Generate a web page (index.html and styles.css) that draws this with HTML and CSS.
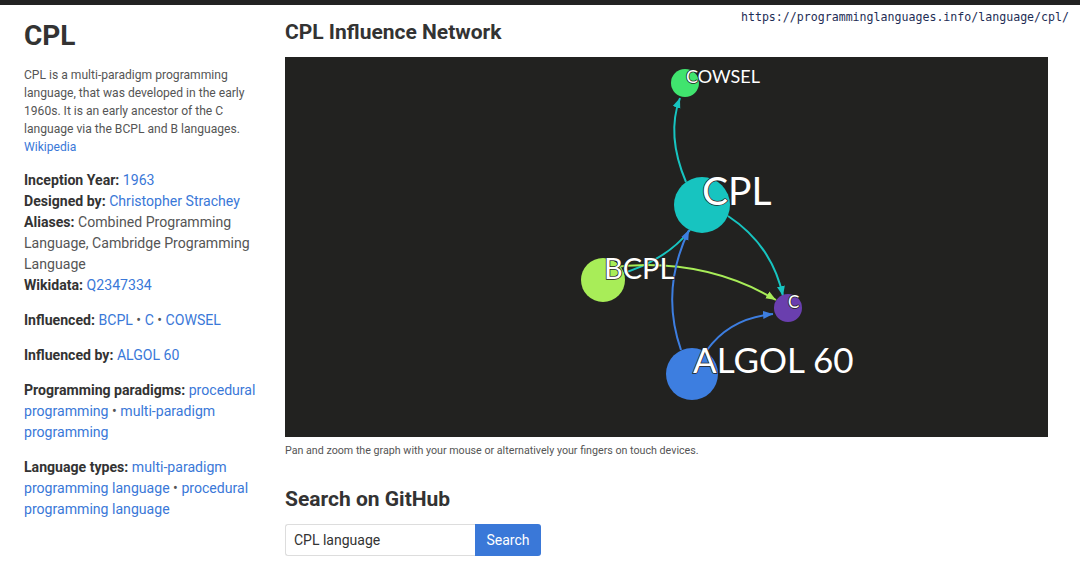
FILE: index.html
```html
<!DOCTYPE html>
<html lang="en">
<head>
<meta charset="utf-8">
<title>CPL</title>
<link rel="stylesheet" href="styles.css">
</head>
<body>
<div class="topbar"></div>
<div class="url">https://programminglanguages.info/language/cpl/</div>
<div class="page">
  <aside class="side">
    <h1 class="title">CPL</h1>
    <p class="summary">CPL is a multi-paradigm programming language, that was developed in the early 1960s. It is an early ancestor of the C language via the BCPL and B languages. <a href="#">Wikipedia</a></p>
    <p class="facts">
      <b>Inception Year:</b> <a href="#">1963</a><br>
      <b>Designed by:</b> <a href="#">Christopher Strachey</a><br>
      <b>Aliases:</b> Combined Programming Language, Cambridge Programming Language<br>
      <b>Wikidata:</b> <a href="#">Q2347334</a>
    </p>
    <p class="facts"><b>Influenced:</b> <a href="#">BCPL</a> • <a href="#">C</a> • <a href="#">COWSEL</a></p>
    <p class="facts"><b>Influenced by:</b> <a href="#">ALGOL 60</a></p>
    <p class="facts"><b>Programming paradigms:</b> <a href="#">procedural programming</a> • <a href="#">multi-paradigm programming</a></p>
    <p class="facts"><b>Language types:</b> <a href="#">multi-paradigm programming language</a> • <a href="#">procedural programming language</a></p>
  </aside>
  <main class="main">
    <h2 class="heading">CPL Influence Network</h2>
    <div class="graph">
      <svg width="763" height="380" viewBox="0 0 763 380">
        <defs>
          <marker id="aTeal" markerUnits="userSpaceOnUse" markerWidth="10" markerHeight="10" refX="10" refY="5" orient="auto"><path d="M0,1 L10,5 L0,9 z" fill="#17c4c0"/></marker>
          <marker id="aGreen" markerUnits="userSpaceOnUse" markerWidth="10" markerHeight="10" refX="10" refY="5" orient="auto"><path d="M0,1 L10,5 L0,9 z" fill="#a8ed58"/></marker>
          <marker id="aBlue" markerUnits="userSpaceOnUse" markerWidth="10" markerHeight="10" refX="10" refY="5" orient="auto"><path d="M0,1 L10,5 L0,9 z" fill="#3d7ee0"/></marker>
        </defs>
        <g fill="none" stroke-width="2">
          <path d="M401 125 Q381 78 395 41" stroke="#17c4c0" marker-end="url(#aTeal)"/>
          <path d="M443 159 Q487 188 498 239" stroke="#17c4c0" marker-end="url(#aTeal)"/>
          <path d="M405 173 Q380 205 329 219" stroke="#17c4c0"/>
          <path d="M321 211 Q415 198 491 243" stroke="#a8ed58" marker-end="url(#aGreen)"/>
          <path d="M396 293 Q375 233 404 173" stroke="#3d7ee0" marker-end="url(#aBlue)"/>
          <path d="M422 293 Q445 261 488 257" stroke="#3d7ee0" marker-end="url(#aBlue)"/>
        </g>
        <circle cx="400" cy="26" r="14" fill="#40e46e"/>
        <circle cx="417" cy="148" r="28" fill="#17c4c0"/>
        <circle cx="318" cy="223" r="22" fill="#a8ed58"/>
        <circle cx="503" cy="251" r="14" fill="#6a3fae"/>
        <circle cx="407" cy="317" r="26" fill="#3d7ee0"/>
        <g class="labels">
          <text x="401" y="26" font-size="18">COWSEL</text>
          <text x="417" y="148" font-size="39">CPL</text>
          <text x="319" y="222" font-size="29">BCPL</text>
          <text x="503" y="251" font-size="17">C</text>
          <text x="408" y="316" font-size="35">ALGOL 60</text>
        </g>
      </svg>
    </div>
    <p class="caption">Pan and zoom the graph with your mouse or alternatively your fingers on touch devices.</p>
    <h2 class="heading search-heading">Search on GitHub</h2>
    <form class="search">
      <input class="search-input" type="text" value="CPL language">
      <button class="search-btn" type="button">Search</button>
    </form>
  </main>
</div>
</body>
</html>
```
FILE: styles.css
```css
* { box-sizing: border-box; }
html, body { margin: 0; padding: 0; background: #fff; }
body {
  font-family: Roboto, "Liberation Sans", Arial, sans-serif;
  color: #333;
  position: relative;
}
a { color: #3a78d8; text-decoration: none; }
.topbar { height: 5px; background: #222; }
.url {
  position: absolute;
  top: 9px;
  right: 11px;
  font-family: "DejaVu Sans Mono", monospace;
  font-size: 11.6px;
  color: #1e2d55;
  line-height: 16px;
}
.page {
  display: flex;
  gap: 24px;
  padding-left: 24px;
}
.side {
  width: 237px;
  flex: none;
}
.title {
  margin: 11px 0 0;
  font-size: 28px;
  font-weight: 700;
  line-height: 40px;
  color: #333;
}
.summary {
  margin: 10px 0 0;
  font-size: 12.1px;
  line-height: 18px;
  color: #555;
}
.facts {
  margin: 14px 0 0;
  font-size: 14.1px;
  line-height: 21px;
  color: #555;
}
.summary + .facts { margin-top: 14px; }
.facts b { color: #333; font-weight: 700; }
.main { width: 763px; flex: none; }
.heading {
  margin: 13px 0 0;
  font-size: 21px;
  font-weight: 700;
  line-height: 28px;
  color: #333;
}
.graph {
  margin-top: 11px;
  height: 380px;
  background: #222220;
}
.graph svg { display: block; }
.labels text {
  font-family: Lato, "Noto Sans", sans-serif;
  fill: #fff;
  stroke: #222220;
  stroke-width: 1.5px;
  paint-order: stroke;
}
.caption {
  margin: 7px 0 0;
  font-size: 10.7px;
  line-height: 14px;
  color: #555;
}
.search-heading { margin-top: 27px; }
.search {
  display: flex;
  margin-top: 11px;
}
.search-input {
  width: 190px;
  height: 32px;
  border: 1px solid #ddd;
  border-right: none;
  border-radius: 3px 0 0 3px;
  padding: 0 8px;
  font-family: Roboto, sans-serif;
  font-size: 14px;
  color: #333;
  outline: none;
}
.search-btn {
  height: 32px;
  width: 66px;
  border: none;
  border-radius: 0 3px 3px 0;
  background: #3a78d8;
  color: #fff;
  font-family: Roboto, sans-serif;
  font-size: 14px;
  padding: 0;
}
```
